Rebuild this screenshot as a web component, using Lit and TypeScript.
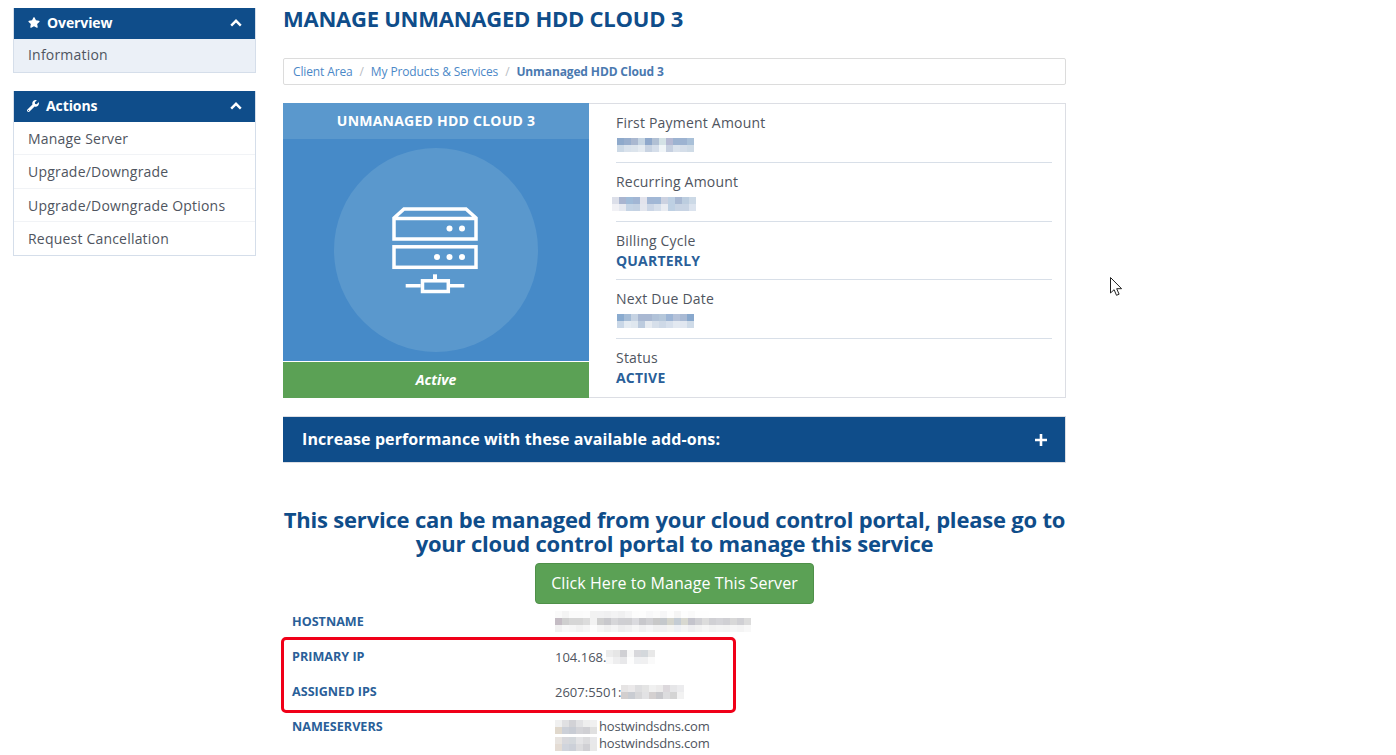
import { LitElement, html, css, svg } from "lit";
import { customElement } from "lit/decorators.js";

const blues1 = [["#8ea9cb","#98aecd","#aab8d0","#c5d4e2","#8fa8cb","#b1c0d4","#d4e2e6","#b5b9d3","#9db3d1","#9db3d1","#a9c0d8"],["#ccd9e6","#d9e2ec","#dce4ec","#e5ebf1","#c8d3e2","#d5deea","#f0f5f8","#c6d0e0","#dae2ec","#d5dee9","#cfdbe6"]];
const blues2 = [["#dcdfe9","#a9b5d0","#a0bbd8","#a2b6d4","#e2e3ec","#a2b7d5","#a1b8d6","#ccd2e1","#bed0e3","#a9b9d3","#bccddf","#ccd9e6"],["#f1f1f5","#e6e9f0","#c5d4e5","#c4d2e3","#e3e6ee","#cbd6e6","#d6dfeb","#e9ecf2","#bed0e3","#c8d4e4","#c8d4e4","#dbe3ee"]];
const blues3 = [["#8aabcf","#a5bcd6","#c6d3e3","#a9b8d2","#a9b8d2","#b1c2d8","#b5c7da","#9db5d5","#b5c2d9","#a9bad4","#88a8cd"],["#c9d7e7","#e4ebf2","#dfe7ef","#bccbde","#e6ebf1","#d6dfea","#ced9e7","#d7e0ec","#e3e9f1","#e1e7f0","#cfdbe8"]];
const greys1 = [
  ["#fafafa","#f4f4f4","#fbfbfb","#fbfbfb","#fcfcfc","#f2f2f2","#f2f2f3","#f0f0f1","#f3f3f4","#f0f0f1","#f5f5f6","#fcfcfc","#fdfdfd","#f8f8f9","#fbfbfb","#f6f6f7","#fdfdfd","#f5f5f5","#fdfdfd","#fafafa","#fefefe","#fefefe","#ffffff","#ffffff","#ffffff","#ffffff","#ffffff","#ffffff"],
  ["#c4bcc4","#cfcfcf","#d6d6d6","#d6d6d6","#dcdcdc","#f2f2f2","#cfcfcf","#c8c8cc","#d6d6d9","#cfcfd3","#cfcfd2","#dadade","#c8c8cc","#d0d0d3","#c8c8c8","#c4c8cc","#d4d4cc","#c4ccd4","#d8d8d0","#c4c4cc","#d0d0d4","#dcdcdc","#d0d0d4","#d4d4d8","#d0d0d4","#d8d8d8","#d0d0d4","#dcdcdc"],
  ["#f1f1f1","#f8f8f8","#f6f6f6","#f2f2f2","#f6f6f6","#fcfcfc","#f5f5f5","#f0f0f0","#f4f4f5","#ededee","#f0f0f1","#f6f6f6","#f0f0f1","#f5f5f6","#f0f0f0","#f0f0f2","#f4f4f2","#eef0f4","#f4f4f4","#eeeef0","#f2f2f2","#f6f6f6","#f2f2f2","#f4f4f4","#f3f3f3","#f6f6f6","#f4f4f4","#f8f8f8"],
];
const greys2 = [["#ececec","#e6e6e6","#d0d0d4","#f8f8f8","#d8d8dc","#d4d8dc","#e8e8e8"],["#f8f8f8","#eeeeef","#e8e8ea","#fdfdfd","#eff0f2","#f0f0f1","#fafafa"]];
const greys3 = [["#e6e4e4","#ebe9ea","#dedee0","#e4e4e4","#f0f0f0","#ecebeb","#dcd8dc","#e6e6e8","#ececee"],["#d2cece","#c9ccd2","#d7d7d9","#e2e2e4","#d4d0d0","#c8c8cc","#dcdcde","#d4d4d4","#f2f2f2"]];
const greys4 = [["#f0f0f0","#e0e0e2","#d2d2d6","#e2e2e4","#eeeeee","#f0f0f0"],["#e0d8cc","#ccd0d8","#c8ccd4","#d4d4d8","#d0d0d4","#e0e0e0"]];
const greys5 = [["#e8e4e0","#d8d8dc","#d4d8dc","#e4e4e6","#dcdcde","#e8e8ea"],["#e4dcd4","#d0d4dc","#ccd0d8","#dcdcde","#d0d0d4","#e8e8e8"]];

const pix = (rows: string[][], cls = "") => html`<span class="pix ${cls}">${rows.map(
  (r) => html`<span class="prow">${r.map((c) => html`<i style="background:${c}"></i>`)}</span>`
)}</span>`;

const chevron = html`<svg class="chev" viewBox="0 0 12 8" aria-hidden="true"><path d="M1.2 6.6 6 1.8l4.8 4.8" fill="none" stroke="#fff" stroke-width="2.4"/></svg>`;

const serverIcon = svg`<g fill="none" stroke="#fff" stroke-width="3.5">
  <path d="M394 218l10-9h62l10 9v21h-82zM394 218.500h82"/>
  <rect x="394" y="246.800" width="82" height="20.500"/>
  <path d="M405.700 285.700h15M450 285.700h14.300"/>
  <rect x="422.500" y="280.800" width="25.800" height="10.700"/>
</g>
<path d="M435 274.300v6" stroke="#fff" stroke-width="4"/>
<g fill="#fff">
  <circle cx="449.500" cy="228.500" r="3"/><circle cx="462" cy="228.500" r="3"/>
  <circle cx="437" cy="257" r="3"/><circle cx="449.500" cy="257" r="3"/><circle cx="462" cy="257" r="3"/>
</g>`;

@customElement("app-root")
export class AppRoot extends LitElement {
  static styles = css`
    :host { display: block; position: relative; height: 755px; overflow: hidden; background: #fff;
      font-family: "Open Sans", sans-serif; font-size: 14px; color: #4a5058; }
    *, *::after { box-sizing: border-box; }
    .page { display: flex; align-items: flex-start; gap: 27px; padding: 8px 0 0 13px; }
    .side { width: 243px; flex: none; display: flex; flex-direction: column; gap: 18px; }
    .panel { border: 1px solid #d5deea; border-top: 0; }
    .phead { height: 31px; margin: 0; background: #0f4d8a; color: #fff; font-weight: 700; font-size: 14px; letter-spacing: -.1px;
      display: flex; align-items: center; padding: 0 13px 2px 14px; }
    .phead svg.star { width: 12px; height: 11px; margin-right: 7px; fill: #fff; }
    .phead svg.wrench { width: 12px; height: 12px; margin: 1px 7px 0 -1px; fill: #fff; }
    .phead .t { flex: 1; }
    .chev { width: 12px; height: 8px; }
    .item { height: 33px; display: flex; align-items: center; padding: 0 14px; font-size: 14px; letter-spacing: .2px; color: #4f5560;
      border-bottom: 1px solid #f1f3f6; }
    .item.tall { height: 34px; }
    .item:last-child { border-bottom: 0; }
    .item.on { background: #ebf0f7; height: 33px; padding-bottom: 2px; }

    .main { width: 783px; flex: none; }
    h1 { margin: 0; height: 50px; font-size: 22px; line-height: 20px; font-weight: 700; letter-spacing: -.25px; color: #0f4d8a; text-transform: uppercase; }
    .crumb { height: 27px; border: 1px solid #dcdcdc; border-radius: 2px; display: flex; align-items: center;
      padding: 0 9px; font-size: 12px; letter-spacing: -.13px; color: #4b88c7; gap: 7px; }
    .crumb .sep { color: #b8bcc2; }
    .crumb b { color: #4a79b0; font-weight: 700; }

    .card { margin-top: 18px; height: 295px; display: flex; border: 1px solid #dcdee4; border-left: 0; }
    .prod { width: 306px; flex: none; display: flex; flex-direction: column; background: #468ac8; margin: -1px 0; }
    .prod .top { height: 36px; padding-bottom: 1px; background: #5a98cd; color: #fff; font-weight: 700; font-size: 14px;
      display: flex; align-items: center; justify-content: center; text-transform: uppercase; letter-spacing: .23px; }
    .prod .art { height: 222px; flex: none; }
    .prod .art svg { width: 306px; height: 222px; display: block; }
    .prod .status { height: 37px; padding-bottom: 2px; border-top: 1px solid #fff; background: #5ba155; color: #fff; font-weight: 700; font-style: italic;
      display: flex; align-items: center; justify-content: center; font-size: 14px; }
    .info { flex: 1; padding: 0 13px 0 27px; display: flex; flex-direction: column; }
    .row { height: 59px; flex: none; border-bottom: 1px solid #d8dfe8; padding-top: 9px; line-height: 20px; font-size: 14px; letter-spacing: .2px; color: #4f5560; }
    .row.short { height: 58px; }
    .row:last-child { border-bottom: 0; height: 58px; }
    .row .val { display: block; font-weight: 700; color: #2a5f99; letter-spacing: .2px; line-height: 20px; }
    .row .pix { margin-top: 5px; }
    .shift-l { margin-left: -4px; }
    .shift-n { margin-left: 1px; }

    .pix { display: flex; flex-direction: column; width: max-content; }
    .prow { display: flex; }
    .pix i { display: block; width: 7px; height: 7px; }

    .addons { margin-top: 18px; height: 47px; background: #0f4d8a; border: 1px solid #dcdee4; border-left: 0; color: #fff;
      font-weight: 700; font-size: 16px; letter-spacing: .1px; display: flex; align-items: center; justify-content: space-between; padding: 0 18px 0 19px; }
    .addons span { margin-bottom: 2px; }
    .addons svg { width: 12px; height: 12px; display: block; }

    h2 { margin: 44px 0 0; font-size: 22px; line-height: 24px; font-weight: 700; letter-spacing: -.2px; color: #0f4d8a; text-align: center; }
    .cta { display: flex; justify-content: center; margin-top: 8px; }
    .btn { height: 41px; padding: 0 15px 2px; border: 1px solid #4f9049; border-radius: 4px; background: #5ba155; color: #fff;
      font: 400 16px "Open Sans", sans-serif; letter-spacing: .07px; display: flex; align-items: center; }

    .tbl { font-size: 12.6px; }
    .tr { display: grid; grid-template-columns: 263px 1fr; padding-left: 9px; height: 35px; align-items: center; }
    .tr .k { font-weight: 700; color: #2a5f99; text-transform: uppercase; }
    .tr .v { display: flex; align-items: center; color: #4f5560; font-size: 13px; }
    .hl { position: relative; }
    .hl::after { content: ""; position: absolute; left: -2px; top: -2px; width: 455px; height: 76px; border: 3px solid #f00018; border-radius: 5px; }
    .ns { align-items: start; height: auto; padding-top: 9px; }
    .ns .k { line-height: 18px; }
    .ns .vs { display: flex; flex-direction: column; font-size: 13px; letter-spacing: -.2px; color: #4f5560; line-height: 17px; }
    .ns .line { display: flex; align-items: center; height: 17px; gap: 2px; }

    .cursor { position: absolute; left: 1110px; top: 277px; width: 13px; height: 20px; }
  `;

  render() {
    return html`
      <div class="page">
        <aside class="side">
          <section class="panel">
            <h3 class="phead">
              <svg class="star" viewBox="0 0 576 512"><path d="M259.3 17.8L194 150.2 47.9 171.5c-26.2 3.8-36.7 36.1-17.7 54.6l105.7 103-25 145.5c-4.5 26.3 23.2 46 46.4 33.7L288 439.6l130.7 68.7c23.2 12.2 50.9-7.4 46.4-33.7l-25-145.5 105.7-103c19-18.5 8.5-50.8-17.7-54.6L382 150.2 316.7 17.8c-11.7-23.6-45.6-23.9-57.4 0z"/></svg>
              <span class="t">Overview</span>${chevron}
            </h3>
            <div class="item on">Information</div>
          </section>
          <section class="panel">
            <h3 class="phead">
              <svg class="wrench" viewBox="0 0 512 512"><path d="M507.73 109.1c-2.24-9.03-13.54-12.09-20.12-5.51l-74.36 74.36-67.88-11.31-11.31-67.88 74.36-74.36c6.62-6.62 3.43-17.9-5.66-20.16-47.38-11.74-99.55.91-136.58 37.93-39.64 39.64-50.55 97.1-34.05 147.2L18.74 402.76c-24.99 24.99-24.99 65.51 0 90.5 24.99 24.99 65.51 24.99 90.5 0l213.21-213.21c50.12 16.71 107.47 5.68 147.37-34.22 37.07-37.07 49.7-89.32 37.91-136.73zM64 472c-13.25 0-24-10.75-24-24 0-13.26 10.75-24 24-24s24 10.74 24 24c0 13.25-10.75 24-24 24z"/></svg>
              <span class="t">Actions</span>${chevron}
            </h3>
            <div class="item">Manage Server</div>
            <div class="item tall">Upgrade/Downgrade</div>
            <div class="item">Upgrade/Downgrade Options</div>
            <div class="item">Request Cancellation</div>
          </section>
        </aside>
        <main class="main">
          <h1>Manage Unmanaged HDD Cloud 3</h1>
          <nav class="crumb">
            <span>Client Area</span><span class="sep">/</span>
            <span>My Products &amp; Services</span><span class="sep">/</span>
            <b>Unmanaged HDD Cloud 3</b>
          </nav>
          <div class="card">
            <div class="prod">
              <div class="top">Unmanaged HDD Cloud 3</div>
              <div class="art">
                <svg viewBox="283 139 306 222">
                  <circle cx="436" cy="250" r="102" fill="#5a98cd"/>
                  ${serverIcon}
                </svg>
              </div>
              <div class="status">Active</div>
            </div>
            <div class="info">
              <div class="row">First Payment Amount${pix(blues1, "shift-n")}</div>
              <div class="row">Recurring Amount${pix(blues2, "shift-l")}</div>
              <div class="row short">Billing Cycle<span class="val">QUARTERLY</span></div>
              <div class="row">Next Due Date${pix(blues3, "shift-n")}</div>
              <div class="row">Status<span class="val">ACTIVE</span></div>
            </div>
          </div>
          <div class="addons">
            <span>Increase performance with these available add-ons:</span>
            <svg viewBox="0 0 12 12"><path d="M6 0v12M0 6h12" stroke="#fff" stroke-width="2.6"/></svg>
          </div>
          <h2>This service can be managed from your cloud control portal, please go to your cloud control portal to manage this service</h2>
          <div class="cta"><div class="btn">Click Here to Manage This Server</div></div>
          <div class="tbl">
            <div class="tr"><span class="k">Hostname</span><span class="v">${pix(greys1)}</span></div>
            <div class="hl">
              <div class="tr"><span class="k">Primary IP</span><span class="v">104.168.${pix(greys2)}</span></div>
              <div class="tr"><span class="k">Assigned IPs</span><span class="v">2607:5501:${pix(greys3)}</span></div>
            </div>
            <div class="tr ns"><span class="k">Nameservers</span>
              <div class="vs">
                <div class="line">${pix(greys4)}hostwindsdns.com</div>
                <div class="line">${pix(greys5)}hostwindsdns.com</div>
              </div>
            </div>
          </div>
        </main>
      </div>
      <svg class="cursor" viewBox="0 0 13 20"><path d="M.5.5v15.5l3.6-3.3 2.4 5.6 2.6-1.1-2.4-5.5h4.9z" fill="#fff" stroke="#222" stroke-width="1"/></svg>
    `;
  }
}
